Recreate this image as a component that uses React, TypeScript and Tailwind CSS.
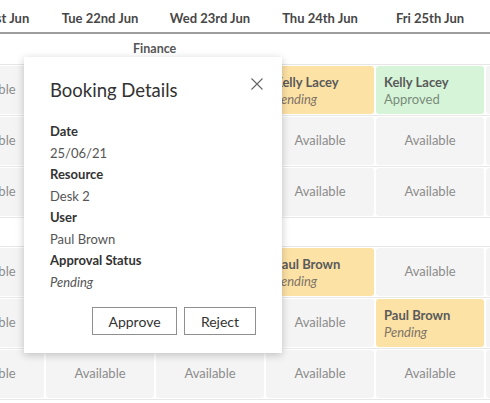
import React from "react";

type Cell =
  | { kind: "free" }
  | { kind: "booked"; user: string; status: "Pending" | "Approved" };

const days = ["Mon 21st Jun", "Tue 22nd Jun", "Wed 23rd Jun", "Thu 24th Jun", "Fri 25th Jun", "Sat 26th Jun"];

const free: Cell = { kind: "free" };

const groups: { name: string; rows: Cell[][] }[] = [
  {
    name: "Finance",
    rows: [
      [free, free, free, { kind: "booked", user: "Kelly Lacey", status: "Pending" }, { kind: "booked", user: "Kelly Lacey", status: "Approved" }, free],
      [free, free, free, free, free, free],
      [free, free, free, free, free, free],
    ],
  },
  {
    name: "Sales",
    rows: [
      [free, free, free, { kind: "booked", user: "Paul Brown", status: "Pending" }, free, free],
      [free, free, free, free, { kind: "booked", user: "Paul Brown", status: "Pending" }, free],
      [free, free, free, free, free, free],
    ],
  },
];

function BookingCell({ cell }: { cell: Cell }) {
  if (cell.kind === "free") {
    return (
      <div className="w-[108px] h-[48px] mx-px rounded-[3px] bg-[#f4f4f4] flex items-center justify-center text-[13px] text-[#8c8c8c]">
        Available
      </div>
    );
  }
  const approved = cell.status === "Approved";
  return (
    <div
      className={
        approved
          ? "w-[108px] h-[48px] mx-px rounded-[3px] bg-[#d6f5d8] flex flex-col justify-center pl-[8px] pt-[2px] leading-[17px]"
          : "w-[108px] h-[48px] mx-px rounded-[3px] bg-[#fde2a6] flex flex-col justify-center pl-[8px] pt-[2px] leading-[17px]"
      }
    >
      <span className="text-[13px] font-bold text-[#5a5a5a]">{cell.user}</span>
      {approved ? (
        <span className="text-[13px] text-[#7a8a7a]">Approved</span>
      ) : (
        <span className="text-[13px] italic text-[#7d7466]">Pending</span>
      )}
    </div>
  );
}

export default function App() {
  return (
    <div
      className="relative w-[490px] h-[403px] overflow-hidden bg-white"
      style={{ fontFamily: "Lato, 'Open Sans', sans-serif" }}
    >
      <div className="ml-[-65px] w-[660px]">
        {/* Day header */}
        <div className="flex h-[34px] border-b-2 border-[#9c9c9c]">
          {days.map((d) => (
            <div key={d} className="w-[110px] flex items-center justify-center pt-[6px] text-[13px] font-bold text-[#474747]">
              {d}
            </div>
          ))}
        </div>

        {groups.map((g, gi) => (
          <div key={g.name}>
            <div
              className={
                gi === 0
                  ? "h-[31px] border-b border-[#e6e6e6] flex items-center pl-[198px] text-[12.5px] font-bold text-[#555]"
                  : "h-[29px] border-b border-[#e6e6e6] flex items-center pl-[198px] text-[12.5px] font-bold text-[#555]"
              }
            >
              {g.name}
            </div>
            {g.rows.map((row, ri) => (
              <div key={ri} className="flex py-px border-b border-[#e8e8e8]">
                {row.map((c, ci) => (
                  <BookingCell key={ci} cell={c} />
                ))}
              </div>
            ))}
          </div>
        ))}
      </div>

      {/* Booking details popover */}
      <div className="absolute left-[24px] top-[57px] w-[258px] h-[296px] bg-white shadow-[0_2px_8px_rgba(0,0,0,0.22)] pl-[26px] pr-[26px] pt-[19px]">
        <div className="flex items-start justify-between">
          <h2 className="text-[18.5px] leading-[28px] text-[#323232]">Booking Details</h2>
          <button className="mt-[1px] mr-[-8px] w-[14px] h-[14px] text-[#666]">
            <svg viewBox="0 0 14 14" width="14" height="14" fill="none" stroke="currentColor" strokeWidth="1.1">
              <path d="M1.5 1.5 L12.5 12.5 M12.5 1.5 L1.5 12.5" />
            </svg>
          </button>
        </div>

        <dl className="mt-[17px] text-[13px] leading-[21.5px]">
          <dt className="font-bold text-[#333]">Date</dt>
          <dd className="text-[#555]">25/06/21</dd>
          <dt className="font-bold text-[#333]">Resource</dt>
          <dd className="text-[#555]">Desk 2</dd>
          <dt className="font-bold text-[#333]">User</dt>
          <dd className="text-[#555]">Paul Brown</dd>
          <dt className="font-bold text-[#333]">Approval Status</dt>
          <dd className="italic text-[#555]">Pending</dd>
        </dl>

        <div className="mt-[14px] flex justify-end gap-[7px]">
          <button className="w-[85px] h-[28px] border border-[#8f8f8f] text-[14px] text-[#333]">Approve</button>
          <button className="w-[72px] h-[28px] border border-[#8f8f8f] text-[14px] text-[#333]">Reject</button>
        </div>
      </div>
    </div>
  );
}
